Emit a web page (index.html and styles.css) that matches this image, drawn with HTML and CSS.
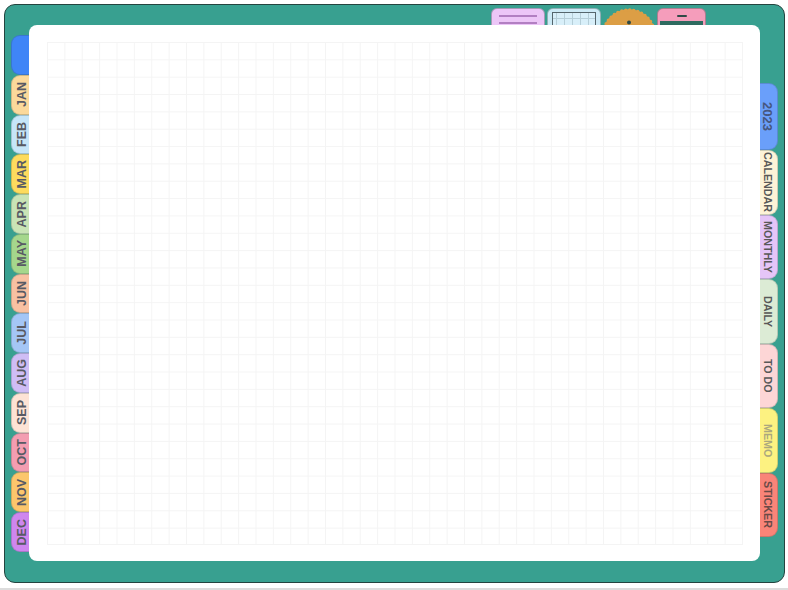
FILE: index.html
```html
<!DOCTYPE html>
<html lang="en">
<head>
  <meta charset="UTF-8" />
  <title>Planner</title>
  <meta name="viewport" content="width=device-width, initial-scale=1.0" />
  <link rel="stylesheet" href="styles.css">
</head>
<body>
  <div class="frame">
    <!-- top tabs, cut off by the edge of the paper -->
    <div class="top-tabs">
      <div class="top-tab tab-lines">
        <div class="line"></div>
        <div class="line"></div>
      </div>
      <div class="top-tab tab-grid">
        <div class="mini-grid"></div>
      </div>
      <svg class="cookie" width="56" height="56" viewBox="0 0 56 56">
        <circle cx="28" cy="28" r="26.7" fill="#dc9e45" />
        <circle cx="28" cy="28" r="25.9" fill="none" stroke="#dc9e45" stroke-width="3.5" stroke-linecap="round" stroke-dasharray="0 4.068" />
        <circle cx="28" cy="14.4" r="2" fill="#2f4a46" />
      </svg>
      <div class="top-tab tab-phone">
        <div class="phone-dash"></div>
        <div class="phone-screen"></div>
      </div>
    </div>

    <div class="book">
      <div class="months">
        <div class="tab month-blank"></div>
        <div class="tab jan"><span>JAN</span></div>
        <div class="tab feb"><span>FEB</span></div>
        <div class="tab mar"><span>MAR</span></div>
        <div class="tab apr"><span>APR</span></div>
        <div class="tab may"><span>MAY</span></div>
        <div class="tab jun"><span>JUN</span></div>
        <div class="tab jul"><span>JUL</span></div>
        <div class="tab aug"><span>AUG</span></div>
        <div class="tab sep"><span>SEP</span></div>
        <div class="tab oct"><span>OCT</span></div>
        <div class="tab nov"><span>NOV</span></div>
        <div class="tab dec"><span>DEC</span></div>
      </div>

      <div class="paper">
        <div class="grid"></div>
      </div>

      <div class="sections">
        <div class="section year"><span>2023</span></div>
        <div class="section calendar"><span>CALENDAR</span></div>
        <div class="section monthly"><span>MONTHLY</span></div>
        <div class="section daily"><span>DAILY</span></div>
        <div class="section todo"><span>TO DO</span></div>
        <div class="section memo"><span>MEMO</span></div>
        <div class="section sticker"><span>STICKER</span></div>
      </div>
    </div>
  </div>
  <div class="bottom-strip"></div>
</body>
</html>
```

FILE: styles.css
```css
html, body {
  height: 590px;
  overflow: hidden;
}

body {
  margin: 0;
  padding-top: 4px;
  box-sizing: border-box;
  background: #fff;
  font-family: "Liberation Sans", Arial, sans-serif;
}

.frame {
  box-sizing: border-box;
  width: 781px;
  height: 579px;
  margin-left: 4px;
  padding-top: 3px;
  background: #38a090;
  border: 1px solid #24443f;
  border-radius: 11px;
}

.bottom-strip {
  height: 2px;
  margin-top: 5px;
  background: #dcdcdc;
}

/* top tabs */
.top-tabs {
  display: flex;
  justify-content: flex-end;
  gap: 2px;
  height: 17px;
  padding-right: 78px;
  overflow: hidden;
}

.top-tab {
  flex: none;
  box-sizing: border-box;
  height: 30px;
  border-radius: 6px 6px 0 0;
  border: 1px solid rgba(36, 68, 63, 0.35);
}

.tab-lines {
  width: 54px;
  padding: 6px 7px 0;
  background: #ecc6f7;
}

.line {
  height: 2px;
  margin-bottom: 5px;
  background: #b27fc2;
}

.tab-grid {
  width: 54px;
  padding: 3px 4px 0;
  background: #cdeaf6;
}

.mini-grid {
  box-sizing: border-box;
  height: 30px;
  border: 1px solid #55666d;
  background-color: #d8eff9;
  background-image:
    linear-gradient(to right, #b5ced8 1px, transparent 1px),
    linear-gradient(to bottom, #b5ced8 1px, transparent 1px);
  background-size: 8px 100%, 100% 7px;
  background-position: 3px 0, 0 5px;
}

.cookie {
  flex: none;
  margin: 0 -2px;
}

.tab-phone {
  width: 49px;
  padding: 6px 2px 0;
  background: #f59dbb;
}

.phone-dash {
  width: 10px;
  height: 2px;
  margin: 0 auto 4px;
  border-radius: 1px;
  background: #2f4a46;
}

.phone-screen {
  height: 20px;
  background: #2e6a5f;
}

/* main row */
.book {
  display: flex;
  align-items: flex-start;
  padding-left: 6px;
}

.months {
  display: flex;
  flex-direction: column;
  width: 18px;
  height: 517px;
  margin-top: 10px;
}

.tab {
  flex: 1;
  box-sizing: border-box;
  display: flex;
  align-items: center;
  justify-content: center;
  border: 1px solid rgba(36, 68, 63, 0.22);
  border-right: none;
  border-radius: 9px 0 0 9px;
  color: #585a64;
  font-size: 12.5px;
  font-weight: bold;
}

.tab span {
  writing-mode: vertical-rl;
  transform: rotate(180deg);
  padding-right: 2px;
}

.month-blank { background: #3f85f7; }
.jan { background: #fbd99b; }
.feb { background: #c6e6f9; }
.mar { background: #fddb5e; }
.apr { background: #c9e4b6; }
.may { background: #a5d78c; }
.jun { background: #f8c1a2; }
.jul { background: #a4c6f6; }
.aug { background: #cfbdf5; }
.sep { background: #fde3d5; }
.oct { background: #f39db1; }
.nov { background: #fcc66c; }
.dec { background: #cf86ef; }

.paper {
  box-sizing: border-box;
  flex: none;
  width: 731px;
  height: 536px;
  padding: 17px 17px 16px 18px;
  background: #fff;
  border-radius: 8px;
}

.grid {
  box-sizing: border-box;
  height: 503px;
  border-right: 1px solid #f4f4f4;
  border-bottom: 1px solid #f4f4f4;
  background-image:
    linear-gradient(to right, #f4f4f4 1px, transparent 1px),
    linear-gradient(to bottom, #f4f4f4 1px, transparent 1px);
  background-size: 17.375px 100%, 100% 17.345px;
}

.sections {
  display: flex;
  flex-direction: column;
  width: 18px;
  margin-top: 58px;
}

.section {
  box-sizing: border-box;
  display: flex;
  align-items: center;
  justify-content: center;
  height: 64.5px;
  border: 1px solid rgba(36, 68, 63, 0.22);
  border-left: none;
  border-radius: 0 9px 9px 0;
  color: #585858;
  font-size: 10.7px;
  font-weight: bold;
  white-space: nowrap;
}

.section span {
  writing-mode: vertical-rl;
  padding-right: 2px;
}

.year {
  height: 67px;
  background: #6a9ffa;
  color: #46567f;
  font-size: 13px;
}

.calendar { background: #fdf3d7; }
.monthly { background: #e5c5f8; }
.daily { background: #dcebd5; }
.todo { background: #fdd6d6; }
.memo { background: #fdf281; color: #aaa77e; }
.sticker { background: #f98478; color: #6a4a47; }
```
